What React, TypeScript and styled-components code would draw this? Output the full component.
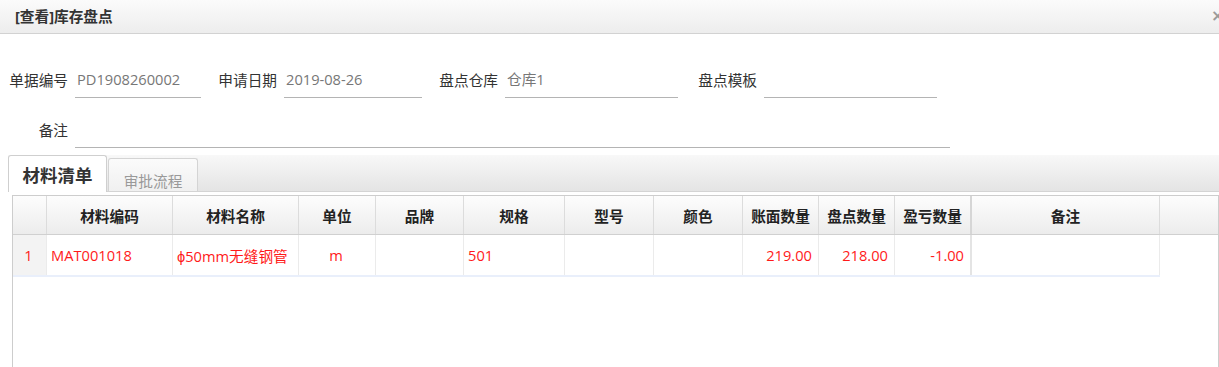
import React from "react";
import styled, { createGlobalStyle } from "styled-components";

const GlobalStyle = createGlobalStyle`
  html, body {
    margin: 0;
    padding: 0;
    background: #fff;
    overflow: hidden;
  }
  body {
    font-family: "Open Sans", "Noto Sans CJK SC", sans-serif;
    font-size: 14.67px;
    color: #333;
  }
  * { box-sizing: border-box; }
`;

const Page = styled.div`
  width: 1219px;
  display: flex;
  flex-direction: column;
`;

const TitleBar = styled.div`
  height: 34px;
  display: flex;
  align-items: center;
  padding: 0 0 2px 15px;
  background: linear-gradient(#fbfbfb, #ededed);
  border-bottom: 1px solid #d2d2d2;
`;

const Title = styled.div`
  font-weight: bold;
  color: #333;
  font-size: 14.67px;
`;

const Close = styled.div`
  margin-left: auto;
  width: 8px;
  white-space: nowrap;
  font-family: "DejaVu Sans", sans-serif;
  font-weight: bold;
  font-size: 16px;
  color: #9a9a9a;
  line-height: 1;
`;

const Form = styled.div`
  display: flex;
  flex-direction: column;
  gap: 14px;
  padding: 28px 0 0 8px;
`;

const FormRow = styled.div`
  display: flex;
  align-items: flex-end;
`;

const Field = styled.div<{ $gap?: number }>`
  display: flex;
  align-items: flex-end;
  margin-left: ${(p) => p.$gap ?? 0}px;
`;

const Label = styled.div`
  width: 60px;
  height: 35px;
  line-height: 35px;
  text-align: right;
  color: #333;
  white-space: nowrap;
`;

const Input = styled.div<{ $w: number }>`
  width: ${(p) => p.$w}px;
  height: 36px;
  margin-left: 7px;
  padding-left: 2px;
  line-height: 35px;
  color: #777;
  border-bottom: 1px solid #b4b4b4;
  white-space: nowrap;
`;

const TabStrip = styled.div`
  margin: 7px 0 0 8px;
  height: 37px;
  display: flex;
  align-items: flex-end;
  background: linear-gradient(#f8f8f8, #e4e4e4);
  border-bottom: 1px solid #d4d4d4;
`;

const ActiveTab = styled.div`
  width: 99px;
  height: 37px;
  margin-bottom: -1px;
  padding-top: 7px;
  line-height: 24px;
  text-align: center;
  background: #fff;
  border: 1px solid #cfcfcf;
  border-bottom: none;
  border-radius: 3px 3px 0 0;
  font-size: 17.5px;
  font-weight: bold;
  color: #333;
`;

const Tab = styled.div`
  width: 90px;
  height: 33px;
  margin-left: 1px;
  padding-top: 13px;
  line-height: 18px;
  text-align: center;
  background: linear-gradient(#fbfbfb, #f0f0f0);
  border: 1px solid #d4d4d4;
  border-bottom: none;
  border-radius: 3px 3px 0 0;
  color: #999;
`;

const Grid = styled.div`
  margin: 3px 0 0 12px;
  width: 1207px;
  height: 220px;
  border: 1px solid #cdcdcd;
  border-bottom: none;
  background: #fff;
`;

const COLS = [34, 126, 126, 77, 88, 101, 89, 89, 76, 76, 77, 188];
const TEMPLATE = COLS.map((c) => `${c}px`).join(" ");

const HeaderRow = styled.div`
  display: grid;
  grid-template-columns: ${TEMPLATE} 1fr;
  height: 39px;
  border-bottom: 1px solid #d0d0d0;
  background: linear-gradient(#fdfdfd, #ececec);
`;

const HeadCell = styled.div<{ $thick?: boolean; $last?: boolean }>`
  display: flex;
  align-items: center;
  justify-content: center;
  font-weight: bold;
  color: #222;
  white-space: nowrap;
  border-right: ${(p) =>
    p.$last ? "none" : p.$thick ? "2px solid #d6d6d6" : "1px solid #dcdcdc"};
`;

const DataRow = styled.div`
  display: grid;
  grid-template-columns: ${TEMPLATE};
  width: 1147px;
  height: 42px;
  border-bottom: 2px solid #e9effb;
`;

const Cell = styled.div<{ $align?: "left" | "center" | "right"; $thick?: boolean; $num?: boolean }>`
  display: flex;
  align-items: center;
  justify-content: ${(p) =>
    p.$align === "right" ? "flex-end" : p.$align === "center" ? "center" : "flex-start"};
  padding: 0 6px 0 4px;
  color: #ff1a1a;
  white-space: nowrap;
  overflow: hidden;
  background: ${(p) => (p.$num ? "#f3f3f3" : "#fff")};
  border-right: ${(p) => (p.$thick ? "2px solid #e4e4e4" : "1px solid #ebebeb")};
`;

const headers = [
  "",
  "材料编码",
  "材料名称",
  "单位",
  "品牌",
  "规格",
  "型号",
  "颜色",
  "账面数量",
  "盘点数量",
  "盈亏数量",
  "备注",
];

type Col = { v: string; align: "left" | "center" | "right"; num?: boolean };
const row: Col[] = [
  { v: "1", align: "center", num: true },
  { v: "MAT001018", align: "left" },
  { v: "ϕ50mm无缝钢管", align: "left" },
  { v: "m", align: "center" },
  { v: "", align: "left" },
  { v: "501", align: "left" },
  { v: "", align: "left" },
  { v: "", align: "left" },
  { v: "219.00", align: "right" },
  { v: "218.00", align: "right" },
  { v: "-1.00", align: "right" },
  { v: "", align: "left" },
];

export default function App() {
  return (
    <>
      <GlobalStyle />
      <Page>
        <TitleBar>
          <Title>[查看]库存盘点</Title>
          <Close>×</Close>
        </TitleBar>
        <Form>
          <FormRow>
            <Field>
              <Label>单据编号</Label>
              <Input $w={126}>PD1908260002</Input>
            </Field>
            <Field $gap={16}>
              <Label>申请日期</Label>
              <Input $w={138}>2019-08-26</Input>
            </Field>
            <Field $gap={16}>
              <Label>盘点仓库</Label>
              <Input $w={173}>仓库1</Input>
            </Field>
            <Field $gap={19}>
              <Label>盘点模板</Label>
              <Input $w={173}></Input>
            </Field>
          </FormRow>
          <FormRow>
            <Field>
              <Label>备注</Label>
              <Input $w={875}></Input>
            </Field>
          </FormRow>
        </Form>
        <TabStrip>
          <ActiveTab>材料清单</ActiveTab>
          <Tab>审批流程</Tab>
        </TabStrip>
        <Grid>
          <HeaderRow>
            {headers.map((h, i) => (
              <HeadCell key={i} $thick={i === 10}>
                {h}
              </HeadCell>
            ))}
            <HeadCell $last />
          </HeaderRow>
          <DataRow>
            {row.map((c, i) => (
              <Cell key={i} $align={c.align} $num={c.num} $thick={i === 10}>
                {c.v}
              </Cell>
            ))}
          </DataRow>
        </Grid>
      </Page>
    </>
  );
}
